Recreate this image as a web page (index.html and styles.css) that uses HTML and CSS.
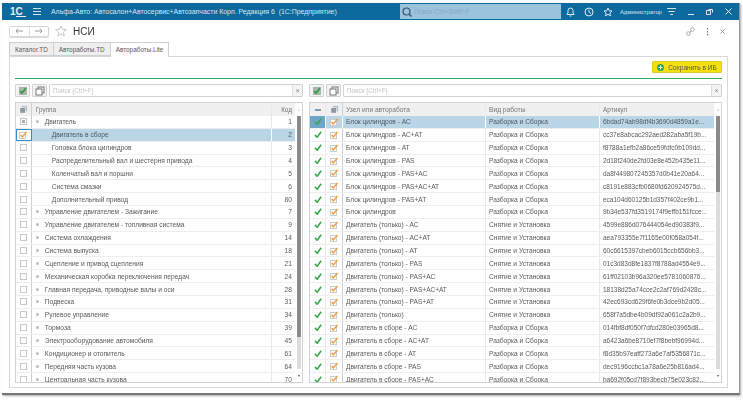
FILE: index.html
```html
<!DOCTYPE html>
<html lang="ru">
<head>
    <meta charset="UTF-8">
    <title>НСИ</title>
    <link rel="stylesheet" href="styles.css">
</head>
<body>
    <svg class="defs" width="0" height="0">
        <symbol id="chk" viewBox="0 0 10 9"><path d="M1 5l3 3 5-7" fill="none" stroke="#35a84a" stroke-width="2"/></symbol>
        <symbol id="box" viewBox="0 0 8 8"><rect x=".5" y=".5" width="7" height="7" fill="#fff" stroke="#c4c4c4"/></symbol>
        <symbol id="boxon" viewBox="0 0 8 8"><rect x=".5" y="1.5" width="6" height="6" fill="#fff" stroke="#cccccc"/><path d="M1.5 4l1.8 2L7.5 1" fill="none" stroke="#f09a3c" stroke-width="1.3"/></symbol>
        <symbol id="copy" viewBox="0 0 10 10"><rect x="3" y="1" width="6" height="6" fill="none" stroke="#777"/><rect x="1" y="3" width="6" height="6" fill="#fff" stroke="#777"/></symbol>
        <symbol id="stack" viewBox="0 0 10 10"><rect x="3" y="1" width="6" height="6" fill="#b4bcc4"/><rect x="1" y="3" width="6" height="6" fill="#8f98a2" stroke="#fff" stroke-width=".6"/></symbol>
        <symbol id="greenchk" viewBox="0 0 10 10"><rect x="1" y="1" width="8" height="8" fill="#a9b7a9"/><path d="M2 5l2 2 4-5" fill="none" stroke="#2e9a46" stroke-width="1.6"/></symbol>
    </svg>

    <div class="window">
        <!-- Шапка окна -->
        <div class="titlebar">
            <span class="logo">1<span class="logo-c">С</span></span>
            <svg class="ic-menu" width="8" height="7" viewBox="0 0 8 7"><path d="M0 .5h8M0 3.5h8M0 6.5h8" stroke="#cfe2ee"/></svg>
            <span class="app-title">Альфа-Авто: Автосалон+Автосервис+Автозапчасти Корп. Редакция 6&nbsp; (1С:Предприятие)</span>
            <div class="global-search">
                <svg width="10" height="10" viewBox="0 0 10 10"><circle cx="4.5" cy="4.5" r="3.5" fill="none" stroke="#33566e" stroke-width="1.2"/><path d="M7 7l2.5 2.5" stroke="#33566e" stroke-width="1.4"/></svg>
                <span>Поиск Ctrl+Shift+F</span>
            </div>
            <div class="title-icons">
                <svg width="9" height="10" viewBox="0 0 9 10"><path d="M1 7.5h7L7 6V3.5a2.5 2.5 0 0 0-5 0V6zM3.5 9h2" fill="none" stroke="#dfeaf2"/></svg>
                <svg width="10" height="10" viewBox="0 0 10 10"><circle cx="5" cy="5" r="4" fill="none" stroke="#dfeaf2"/><path d="M5 2.5V5l2 1.5" fill="none" stroke="#dfeaf2"/></svg>
                <svg width="10" height="10" viewBox="0 0 10 10"><path d="M5 1l1.2 2.7 2.8.3-2.1 1.9.6 2.9L5 7.4 2.500 8.800l.6-2.900L1 4l2.800-.3z" fill="none" stroke="#dfeaf2"/></svg>
                <span class="user">Администратор</span>
                <svg class="ic-funcs" width="9" height="7" viewBox="0 0 9 7"><path d="M0 .5h9M1.500 3.500h6M3 6.500h3" stroke="#cfe2ee"/></svg>
                <svg class="wb-min" width="6" height="7" viewBox="0 0 6 7"><path d="M0 6.500h6" stroke="#dfeaf2"/></svg>
                <svg class="wb" width="7" height="7" viewBox="0 0 7 7"><path d="M2.500 1.500h4v3M.5 2.500h4v4h-4z" fill="none" stroke="#dfeaf2"/></svg>
                <svg class="wb" width="7" height="7" viewBox="0 0 7 7"><path d="M.5.5l6 6M6.500.5l-6 6" stroke="#dfeaf2"/></svg>
            </div>
        </div>

        <!-- Заголовок формы -->
        <div class="form-head">
            <div class="nav-btns">
                <div class="nav-btn"><svg width="8" height="6" viewBox="0 0 8 6"><path d="M8 3H1M3 .8L1 3l2 2.200" fill="none" stroke="#999"/></svg></div>
                <div class="nav-btn"><svg width="8" height="6" viewBox="0 0 8 6"><path d="M0 3h7M5 .8L7 3 5 5.200" fill="none" stroke="#999"/></svg></div>
            </div>
            <svg class="fav" width="12" height="12" viewBox="0 0 12 12"><path d="M6 .8l1.500 3.500 3.800.4-2.900 2.500.9 3.700L6 9l-3.300 1.900.9-3.700L.7 4.700l3.800-.4z" fill="none" stroke="#c8c8c8"/></svg>
            <h1>НСИ</h1>
            <div class="form-actions">
                <svg width="9" height="9" viewBox="0 0 9 9"><circle cx="2.500" cy="6.500" r="1.800" fill="none" stroke="#aaa"/><circle cx="6.500" cy="2.500" r="1.800" fill="none" stroke="#aaa"/><path d="M3.500 5.500l2-2" stroke="#aaa"/></svg>
                <svg width="3" height="9" viewBox="0 0 3 9"><path d="M1.500 1v1.500M1.500 4v1.500M1.500 7v1.500" stroke="#777" stroke-width="1.200"/></svg>
                <svg width="5" height="5" viewBox="0 0 5 5"><path d="M.5.5l4 4M4.500.5l-4 4" stroke="#999"/></svg>
            </div>
        </div>

        <!-- Вкладки -->
        <div class="tabs">
            <div class="tab">Каталог.TD</div>
            <div class="tab">Автоработы.TD</div>
            <div class="tab active">Автоработы.Lite</div>
        </div>

        <div class="panel">
            <div class="save-row">
                <button class="save-btn">
                    <svg width="7" height="7" viewBox="0 0 7 7"><circle cx="3.500" cy="3.500" r="3.500" fill="#2fa84f"/><path d="M3.500 1.500v4M1.500 3.500h4" stroke="#fff"/></svg>
                    Сохранить в ИБ
                </button>
            </div>
            <div class="green-line"></div>

            <div class="split">
                <!-- Группы -->
                <div class="side left-side">
                    <div class="toolbar">
                        <div class="tool-btn"><svg width="10" height="10"><use href="#greenchk"/></svg></div>
                        <div class="tool-btn"><svg width="10" height="10"><use href="#copy"/></svg></div>
                        <div class="search"><span>Поиск (Ctrl+F)</span><i>×</i></div>
                    </div>
                    <div class="table">
                        <div class="table-main">
                            <div class="row head">
                                <div class="c c-chk"><svg width="9" height="9"><use href="#stack"/></svg></div>
                                <div class="c c-group">Группа</div>
                                <div class="c c-code">Код</div>
                            </div>
                            <div class="row"><div class="c c-chk"><span class="mixed"></span></div><div class="c c-group"><b class="dot"></b>Двигатель</div><div class="c c-code">1</div></div>
                            <div class="row sel"><div class="c c-chk cur"><svg width="8" height="8"><use href="#boxon"/></svg></div><div class="c c-group sub">Двигатель в сборе</div><div class="c c-code">2</div></div>
                            <div class="row"><div class="c c-chk"><svg width="7" height="7"><use href="#box"/></svg></div><div class="c c-group sub">Головка блока цилиндров</div><div class="c c-code">3</div></div>
                            <div class="row"><div class="c c-chk"><svg width="7" height="7"><use href="#box"/></svg></div><div class="c c-group sub">Распределительный вал и шестерня привода</div><div class="c c-code">4</div></div>
                            <div class="row"><div class="c c-chk"><svg width="7" height="7"><use href="#box"/></svg></div><div class="c c-group sub">Коленчатый вал и поршни</div><div class="c c-code">5</div></div>
                            <div class="row"><div class="c c-chk"><svg width="7" height="7"><use href="#box"/></svg></div><div class="c c-group sub">Система смазки</div><div class="c c-code">6</div></div>
                            <div class="row"><div class="c c-chk"><svg width="7" height="7"><use href="#box"/></svg></div><div class="c c-group sub">Дополнительный привод</div><div class="c c-code">80</div></div>
                            <div class="row"><div class="c c-chk"><svg width="7" height="7"><use href="#box"/></svg></div><div class="c c-group"><b class="dot"></b>Управление двигателем - Зажигание</div><div class="c c-code">7</div></div>
                            <div class="row"><div class="c c-chk"><svg width="7" height="7"><use href="#box"/></svg></div><div class="c c-group"><b class="dot"></b>Управление двигателем - топливная система</div><div class="c c-code">9</div></div>
                            <div class="row"><div class="c c-chk"><svg width="7" height="7"><use href="#box"/></svg></div><div class="c c-group"><b class="dot"></b>Система охлаждения</div><div class="c c-code">14</div></div>
                            <div class="row"><div class="c c-chk"><svg width="7" height="7"><use href="#box"/></svg></div><div class="c c-group"><b class="dot"></b>Система выпуска</div><div class="c c-code">18</div></div>
                            <div class="row"><div class="c c-chk"><svg width="7" height="7"><use href="#box"/></svg></div><div class="c c-group"><b class="dot"></b>Сцепление и привод сцепления</div><div class="c c-code">21</div></div>
                            <div class="row"><div class="c c-chk"><svg width="7" height="7"><use href="#box"/></svg></div><div class="c c-group"><b class="dot"></b>Механическая коробка переключения передач</div><div class="c c-code">24</div></div>
                            <div class="row"><div class="c c-chk"><svg width="7" height="7"><use href="#box"/></svg></div><div class="c c-group"><b class="dot"></b>Главная передача, приводные валы и оси</div><div class="c c-code">28</div></div>
                            <div class="row"><div class="c c-chk"><svg width="7" height="7"><use href="#box"/></svg></div><div class="c c-group"><b class="dot"></b>Подвеска</div><div class="c c-code">31</div></div>
                            <div class="row"><div class="c c-chk"><svg width="7" height="7"><use href="#box"/></svg></div><div class="c c-group"><b class="dot"></b>Рулевое управление</div><div class="c c-code">34</div></div>
                            <div class="row"><div class="c c-chk"><svg width="7" height="7"><use href="#box"/></svg></div><div class="c c-group"><b class="dot"></b>Тормоза</div><div class="c c-code">39</div></div>
                            <div class="row"><div class="c c-chk"><svg width="7" height="7"><use href="#box"/></svg></div><div class="c c-group"><b class="dot"></b>Электрооборудование автомобиля</div><div class="c c-code">45</div></div>
                            <div class="row"><div class="c c-chk"><svg width="7" height="7"><use href="#box"/></svg></div><div class="c c-group"><b class="dot"></b>Кондиционер и отопитель</div><div class="c c-code">61</div></div>
                            <div class="row"><div class="c c-chk"><svg width="7" height="7"><use href="#box"/></svg></div><div class="c c-group"><b class="dot"></b>Передняя часть кузова</div><div class="c c-code">64</div></div>
                            <div class="row"><div class="c c-chk"><svg width="7" height="7"><use href="#box"/></svg></div><div class="c c-group"><b class="dot"></b>Центральная часть кузова</div><div class="c c-code">70</div></div>
                        </div>
                        <div class="scroll"><u class="up"></u><div class="track"><div class="thumb thumb-left"></div></div><u class="down"></u></div>
                    </div>
                </div>

                <!-- Автоработы -->
                <div class="side right-side">
                    <div class="toolbar">
                        <div class="tool-btn"><svg width="10" height="10"><use href="#greenchk"/></svg></div>
                        <div class="tool-btn"><svg width="10" height="10"><use href="#copy"/></svg></div>
                        <div class="search"><span>Поиск (Ctrl+F)</span><i>×</i></div>
                    </div>
                    <div class="table">
                        <div class="table-main">
                            <div class="row head">
                                <div class="c c-st"><span class="dash"></span></div>
                                <div class="c c-box"><svg width="9" height="9"><use href="#stack"/></svg></div>
                                <div class="c c-node">Узел или авторабота</div>
                                <div class="c c-work">Вид работы</div>
                                <div class="c c-art">Артикул</div>
                            </div>
                            <div class="row sel"><div class="c c-st cur"><svg width="8" height="7"><use href="#chk"/></svg></div><div class="c c-box"><svg width="8" height="8"><use href="#boxon"/></svg></div><div class="c c-node">Блок цилиндров - АС</div><div class="c c-work">Разборка и Сборка</div><div class="c c-art">6bdad74ab98df4b3690d4859a1e...</div></div>
                            <div class="row"><div class="c c-st"><svg width="8" height="7"><use href="#chk"/></svg></div><div class="c c-box"><svg width="8" height="8"><use href="#boxon"/></svg></div><div class="c c-node">Блок цилиндров - АС+АТ</div><div class="c c-work">Разборка и Сборка</div><div class="c c-art">cc37e8abcac292aed282aba5f19b...</div></div>
                            <div class="row"><div class="c c-st"><svg width="8" height="7"><use href="#chk"/></svg></div><div class="c c-box"><svg width="8" height="8"><use href="#boxon"/></svg></div><div class="c c-node">Блок цилиндров - АТ</div><div class="c c-work">Разборка и Сборка</div><div class="c c-art">f8788a1efb2a86ce59fdfc0b109dd...</div></div>
                            <div class="row"><div class="c c-st"><svg width="8" height="7"><use href="#chk"/></svg></div><div class="c c-box"><svg width="8" height="8"><use href="#boxon"/></svg></div><div class="c c-node">Блок цилиндров - PAS</div><div class="c c-work">Разборка и Сборка</div><div class="c c-art">2d18f240de2fd03e8e452b435e11...</div></div>
                            <div class="row"><div class="c c-st"><svg width="8" height="7"><use href="#chk"/></svg></div><div class="c c-box"><svg width="8" height="8"><use href="#boxon"/></svg></div><div class="c c-node">Блок цилиндров - PAS+АС</div><div class="c c-work">Разборка и Сборка</div><div class="c c-art">da8f449807245357d0b41e20a64...</div></div>
                            <div class="row"><div class="c c-st"><svg width="8" height="7"><use href="#chk"/></svg></div><div class="c c-box"><svg width="8" height="8"><use href="#boxon"/></svg></div><div class="c c-node">Блок цилиндров - PAS+АС+АТ</div><div class="c c-work">Разборка и Сборка</div><div class="c c-art">c8191e883cfb0680fd620924575d...</div></div>
                            <div class="row"><div class="c c-st"><svg width="8" height="7"><use href="#chk"/></svg></div><div class="c c-box"><svg width="8" height="8"><use href="#boxon"/></svg></div><div class="c c-node">Блок цилиндров - PAS+АТ</div><div class="c c-work">Разборка и Сборка</div><div class="c c-art">eca104d60125b1d357f402ce9b1...</div></div>
                            <div class="row"><div class="c c-st"><svg width="8" height="7"><use href="#chk"/></svg></div><div class="c c-box"><svg width="8" height="8"><use href="#boxon"/></svg></div><div class="c c-node">Блок цилиндров</div><div class="c c-work">Разборка и Сборка</div><div class="c c-art">9b34e537fd3519174f9effb151fcce...</div></div>
                            <div class="row"><div class="c c-st"><svg width="8" height="7"><use href="#chk"/></svg></div><div class="c c-box"><svg width="8" height="8"><use href="#boxon"/></svg></div><div class="c c-node">Двигатель (только) - АС</div><div class="c c-work">Снятие и Установка</div><div class="c c-art">4599e886d076444054ed90383f9...</div></div>
                            <div class="row"><div class="c c-st"><svg width="8" height="7"><use href="#chk"/></svg></div><div class="c c-box"><svg width="8" height="8"><use href="#boxon"/></svg></div><div class="c c-node">Двигатель (только) - АС+АТ</div><div class="c c-work">Снятие и Установка</div><div class="c c-art">aea793355e7f1165e00f058a054f...</div></div>
                            <div class="row"><div class="c c-st"><svg width="8" height="7"><use href="#chk"/></svg></div><div class="c c-box"><svg width="8" height="8"><use href="#boxon"/></svg></div><div class="c c-node">Двигатель (только) - АТ</div><div class="c c-work">Снятие и Установка</div><div class="c c-art">60c6615397cbeb6015ccb656bb3...</div></div>
                            <div class="row"><div class="c c-st"><svg width="8" height="7"><use href="#chk"/></svg></div><div class="c c-box"><svg width="8" height="8"><use href="#boxon"/></svg></div><div class="c c-node">Двигатель (только) - PAS</div><div class="c c-work">Снятие и Установка</div><div class="c c-art">01c3d83d8fe1837f8788ad4554e9...</div></div>
                            <div class="row"><div class="c c-st"><svg width="8" height="7"><use href="#chk"/></svg></div><div class="c c-box"><svg width="8" height="8"><use href="#boxon"/></svg></div><div class="c c-node">Двигатель (только) - PAS+АС</div><div class="c c-work">Снятие и Установка</div><div class="c c-art">61ff02103b96a320ee5781060876...</div></div>
                            <div class="row"><div class="c c-st"><svg width="8" height="7"><use href="#chk"/></svg></div><div class="c c-box"><svg width="8" height="8"><use href="#boxon"/></svg></div><div class="c c-node">Двигатель (только) - PAS+АС+АТ</div><div class="c c-work">Снятие и Установка</div><div class="c c-art">18138d25a74cce2c2af769d2428c...</div></div>
                            <div class="row"><div class="c c-st"><svg width="8" height="7"><use href="#chk"/></svg></div><div class="c c-box"><svg width="8" height="8"><use href="#boxon"/></svg></div><div class="c c-node">Двигатель (только) - PAS+АТ</div><div class="c c-work">Снятие и Установка</div><div class="c c-art">42ec693cd629f6fe0b3dce9b2d05...</div></div>
                            <div class="row"><div class="c c-st"><svg width="8" height="7"><use href="#chk"/></svg></div><div class="c c-box"><svg width="8" height="8"><use href="#boxon"/></svg></div><div class="c c-node">Двигатель (только)</div><div class="c c-work">Снятие и Установка</div><div class="c c-art">658f7a5dbe4b09df92a061c2a2b9...</div></div>
                            <div class="row"><div class="c c-st"><svg width="8" height="7"><use href="#chk"/></svg></div><div class="c c-box"><svg width="8" height="8"><use href="#boxon"/></svg></div><div class="c c-node">Двигатель в сборе - АС</div><div class="c c-work">Разборка и Сборка</div><div class="c c-art">014fbf8df050f7dfcd280e03965d8...</div></div>
                            <div class="row"><div class="c c-st"><svg width="8" height="7"><use href="#chk"/></svg></div><div class="c c-box"><svg width="8" height="8"><use href="#boxon"/></svg></div><div class="c c-node">Двигатель в сборе - АС+АТ</div><div class="c c-work">Разборка и Сборка</div><div class="c c-art">a6423a6be8710ef7f8bebf96994d...</div></div>
                            <div class="row"><div class="c c-st"><svg width="8" height="7"><use href="#chk"/></svg></div><div class="c c-box"><svg width="8" height="8"><use href="#boxon"/></svg></div><div class="c c-node">Двигатель в сборе - АТ</div><div class="c c-work">Разборка и Сборка</div><div class="c c-art">f8d35b97eaff273a6e7af5356871c...</div></div>
                            <div class="row"><div class="c c-st"><svg width="8" height="7"><use href="#chk"/></svg></div><div class="c c-box"><svg width="8" height="8"><use href="#boxon"/></svg></div><div class="c c-node">Двигатель в сборе - PAS</div><div class="c c-work">Разборка и Сборка</div><div class="c c-art">dec9196ccbc1a78a6e25b816ad4...</div></div>
                            <div class="row"><div class="c c-st"><svg width="8" height="7"><use href="#chk"/></svg></div><div class="c c-box"><svg width="8" height="8"><use href="#boxon"/></svg></div><div class="c c-node">Двигатель в сборе - PAS+АС</div><div class="c c-work">Разборка и Сборка</div><div class="c c-art">ba692f05cd7f893becb75e023c82...</div></div>
                        </div>
                        <div class="scroll"><u class="up"></u><div class="track"><div class="thumb thumb-right"></div></div><u class="down"></u></div>
                    </div>
                </div>
            </div>
        </div>
    </div>
</body>
</html>
```

FILE: styles.css
```css
* {
    margin: 0;
    padding: 0;
    box-sizing: border-box;
}

html, body {
    height: 400px;
    overflow: hidden;
}

body {
    font-family: "Liberation Sans", Arial, sans-serif;
    font-size: 6.65px;
    color: #5a5a5a;
    background-color: #fff;
    padding: 3px 3px 5px 2px;
}

.defs {
    display: block;
    height: 0;
}

/* скриншот слегка размыт масштабированием */
.window {
    height: 392px;
    background-color: #fff;
    border-right: 1px solid #999;
    border-bottom: 2px solid #777;
    box-shadow: 1px 1px 2px rgba(0, 0, 0, 0.35);
    display: flex;
    flex-direction: column;
    filter: blur(0.35px);
}

/* шапка */
.titlebar {
    height: 17px;
    flex: none;
    background-color: #0c6a9e;
    color: #d8e6ef;
    display: flex;
    align-items: center;
    padding-left: 8px;
}

.logo {
    width: 16px;
    flex: none;
    font-size: 10px;
    line-height: 9px;
    font-weight: bold;
    color: #e6eff5;
    white-space: nowrap;
}

.logo-c {
    display: inline-block;
    padding-right: 3px;
    border-bottom: 1px solid #e6eff5;
}

.ic-menu {
    margin-left: 7px;
    flex: none;
}

.app-title {
    margin-left: 10px;
    width: 349px;
    flex: none;
    white-space: nowrap;
    font-size: 6.93px;
}

.global-search {
    width: 161px;
    height: 15px;
    flex: none;
    background-color: #9cc3dc;
    color: #83a9c3;
    display: flex;
    align-items: center;
    gap: 2px;
    padding-left: 2px;
}

.title-icons {
    display: flex;
    align-items: center;
    margin-left: 5px;
    gap: 9px;
}

.title-icons svg {
    flex: none;
}

.user {
    font-size: 5.8px;
    margin-left: -2px;
    white-space: nowrap;
}

.ic-funcs {
    margin-left: -4px;
}

.wb-min {
    margin-left: 3px;
}

.wb {
    margin-left: 3px;
}

/* заголовок формы */
.form-head {
    height: 22px;
    flex: none;
    display: flex;
    align-items: center;
    padding: 0 14px 0 7px;
}

.nav-btns {
    display: flex;
    width: 40px;
    height: 11px;
    border: 1px solid #d6d6d6;
    border-radius: 2px;
    box-shadow: 0 1px 1px rgba(0, 0, 0, 0.15);
}

.nav-btn {
    flex: 1;
    display: flex;
    align-items: center;
    justify-content: center;
}

.nav-btn + .nav-btn {
    border-left: 1px solid #e0e0e0;
}

.fav {
    margin-left: 6px;
}

h1 {
    font-size: 10px;
    font-weight: normal;
    color: #333;
    margin-left: 6px;
    flex: 1;
}

.form-actions {
    display: flex;
    align-items: center;
    gap: 11px;
}

/* вкладки */
.tabs {
    flex: none;
    display: flex;
    height: 14px;
    padding-left: 7px;
    position: relative;
    z-index: 1;
}

.tab {
    height: 14px;
    padding: 0 5px;
    line-height: 13px;
    font-size: 6.4px;
    background-color: #efefef;
    border: 1px solid #d0d0d0;
    border-right: none;
    white-space: nowrap;
}

.tab.active {
    height: 15px;
    background-color: #fff;
    border-right: 1px solid #d0d0d0;
    border-bottom: none;
}

.panel {
    flex: 1;
    min-height: 0;
    margin: 0 11px 5px 7px;
    border: 1px solid #d8d8d8;
    padding: 0 5px 4px 5px;
    display: flex;
    flex-direction: column;
}

.save-row {
    display: flex;
    justify-content: flex-end;
    height: 21px;
    padding-top: 4px;
}

.save-btn {
    width: 70px;
    height: 12px;
    font: inherit;
    font-size: 6.5px;
    color: #555;
    background-color: #f4e00f;
    border: 1px solid #dccb2a;
    border-radius: 1px;
    display: flex;
    align-items: center;
    justify-content: center;
    gap: 4px;
}

.green-line {
    height: 1px;
    background-color: #27ae60;
    flex: none;
}

.split {
    flex: 1;
    min-height: 0;
    display: flex;
    margin-top: 5px;
}

.side {
    display: flex;
    flex-direction: column;
    min-width: 0;
}

.left-side {
    width: 288px;
}

.right-side {
    flex: 1;
    margin-left: 6px;
    padding-left: 0;
}

.toolbar {
    flex: none;
    height: 13px;
    display: flex;
    gap: 2px;
    margin-bottom: 5px;
}

.tool-btn {
    width: 15px;
    height: 13px;
    border: 1px solid #d2d2d2;
    border-radius: 1px;
    background-color: #f3f3f3;
    display: flex;
    align-items: center;
    justify-content: center;
}

.search {
    flex: 1;
    border: 1px solid #d2d2d2;
    border-radius: 1px;
    display: flex;
    justify-content: space-between;
    align-items: center;
    padding-left: 3px;
    color: #c4c4c4;
    font-size: 6.3px;
}

.search i {
    width: 10px;
    height: 11px;
    border-left: 1px solid #ddd;
    background-color: #f3f3f3;
    color: #777;
    text-align: center;
    font-style: normal;
    line-height: 11px;
}

/* таблицы */
.table {
    flex: 1;
    min-height: 0;
    display: flex;
    border: 1px solid #d2d2d2;
    overflow: hidden;
}

.table-main {
    flex: 1;
    min-width: 0;
    overflow: hidden;
}

.row {
    display: flex;
    height: 12.86px;
    border-bottom: 1px solid #eeeeee;
}

.row.head {
    height: 13px;
    background-color: #f0f0f0;
    border-bottom: none;
    color: #777;
    font-size: 6.4px;
}

.row.sel {
    background-color: #bad5e6;
    color: #4d5a63;
}

.c {
    display: flex;
    align-items: center;
    height: 100%;
    white-space: nowrap;
    overflow: hidden;
    border-right: 1px solid #e9e9e9;
}

.row.sel .c {
    border-right-color: #fff;
}

.c-chk {
    width: 16px;
    justify-content: center;
    border-right-color: #cfcfcf;
}

.c-chk.cur {
    background-color: #fff;
    outline: 1px solid #3b8cc0;
    outline-offset: -1px;
}

.mixed {
    width: 7px;
    height: 7px;
    border: 1px solid #c4c4c4;
    background-color: #aaa;
    box-shadow: inset 0 0 0 1px #fff;
}

.c-group {
    width: 243px;
    padding-left: 4px;
}

.c-group.sub {
    padding-left: 20px;
}

.dot {
    width: 3px;
    height: 3px;
    border-radius: 50%;
    background-color: #bdbdbd;
    margin-right: 6px;
    flex: none;
}

.c-code {
    width: 23px;
    justify-content: flex-end;
    padding-right: 3px;
    border-right: none;
}

.c-st {
    width: 16px;
    justify-content: center;
}

.c-st.cur {
    background-color: #6da6c9;
}

.dash {
    width: 6px;
    height: 2px;
    background-color: #7e9eb5;
}

.c-box {
    width: 17px;
    justify-content: center;
    border-right-color: #cfcfcf;
}

.c-node {
    width: 143px;
    padding-left: 3px;
    font-size: 6.6px;
}

.c-work {
    width: 114px;
    padding-left: 3px;
    font-size: 6.65px;
}

.c-art {
    width: 114px;
    padding-left: 3px;
    border-right: none;
    font-size: 6.5px;
}

.scroll {
    width: 7px;
    flex: none;
    display: flex;
    flex-direction: column;
    align-items: center;
}

.scroll u {
    height: 13px;
    flex: none;
    display: flex;
    align-items: center;
    justify-content: center;
}

.scroll u::before {
    content: "";
    border-left: 1.5px solid transparent;
    border-right: 1.5px solid transparent;
}

.up::before {
    border-bottom: 2px solid #ccc;
}

.down::before {
    border-top: 2px solid #555;
}

.track {
    flex: 1;
    width: 4px;
    background-color: #dcdcdc;
}

.thumb {
    background-color: #8a8a8a;
}

.thumb-left {
    height: 221px;
}

.thumb-right {
    height: 76px;
}
```
